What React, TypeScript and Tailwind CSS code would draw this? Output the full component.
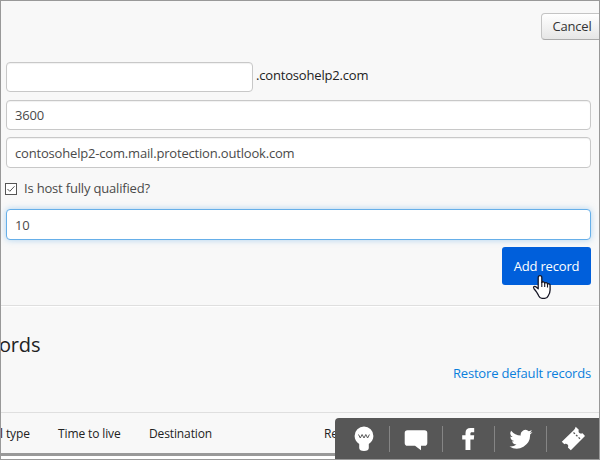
import type { ReactNode } from "react";

const FIELD =
  "block w-full rounded-[4px] border border-[#c8c8c8] bg-white px-2 text-[13px] text-[#4a4a4a] shadow-[inset_0_1px_1px_rgba(0,0,0,0.06)] outline-none";

function ToolbarItem({ children, className }: { children: ReactNode; className: string }) {
  return <div className={`flex h-full shrink-0 items-center ${className}`}>{children}</div>;
}

function Divider() {
  return <div className="h-[26px] w-px shrink-0 bg-[#858585]" />;
}

function ShareToolbar() {
  return (
    <div className="absolute right-0 bottom-0 flex h-[41px] w-[264px] items-center rounded-tl-[4px] bg-[#575757] text-white">
      <ToolbarItem className="w-[54px] pt-px pl-[19px]">
        <svg width="20" height="26" viewBox="0 0 20 26" fill="currentColor">
          <path d="M10 .6A9.400 9.400 0 0 0 .6 10c0 3.800 2.100 6.200 4.600 8v4c0 2 1.800 3 4.800 3s4.800-1 4.800-3v-4c2.500-1.800 4.600-4.200 4.600-8A9.400 9.400 0 0 0 10 .6Z" />
          <path d="m4.500 8.500 1.800 3.500 1.800-3.500 1.900 3.500 1.800-3.500 1.800 3.500 1.800-3.500" fill="none" stroke="#575757" strokeWidth="1" />
        </svg>
      </ToolbarItem>
      <Divider />
      <ToolbarItem className="w-[52px] pt-[2px] pl-[14px]">
        <svg width="25" height="24" viewBox="0 0 25 24" fill="currentColor">
          <path d="M3.500 2.300h17a2.800 2.800 0 0 1 2.800 2.800v9.800a2.800 2.800 0 0 1-2.800 2.800H17v4.500l-6-4.500H3.500A2.800 2.800 0 0 1 .7 14.900V5.100a2.800 2.800 0 0 1 2.800-2.800Z" />
        </svg>
      </ToolbarItem>
      <Divider />
      <ToolbarItem className="w-[51px] pt-px pl-[19px]">
        <svg width="14" height="24" viewBox="0 0 14 24" fill="currentColor">
          <path d="M3.500 23V12.500H.2V8.300h3.300V6C3.500 2.700 5.300 1 8.500 1h3.700v4.200H9.900C8.700 5.200 8.400 5.700 8.400 6.700v1.600h3.800l-.4 4.200H8.400V23Z" />
        </svg>
      </ToolbarItem>
      <Divider />
      <ToolbarItem className="w-[51px] pt-px pl-[14px]">
        <svg width="24" height="24" viewBox="0 0 24 24" fill="currentColor">
          <path d="M23.500 4.900a9 9 0 0 1-2.700.8 4.700 4.700 0 0 0 2-2.600 9 9 0 0 1-3 1.200 4.700 4.700 0 0 0-8 4.300A13.500 13.500 0 0 1 2.100 3.700a4.700 4.700 0 0 0 1.500 6.300 4.700 4.700 0 0 1-2.200-.6 4.700 4.700 0 0 0 3.800 4.700 4.700 4.700 0 0 1-2.100.1 4.700 4.700 0 0 0 4.400 3.300A9.500 9.500 0 0 1 .5 19.400a13.400 13.400 0 0 0 20.600-12 9 9 0 0 0 2.400-2.500Z" />
        </svg>
      </ToolbarItem>
      <Divider />
      <ToolbarItem className="w-[51px] pl-[14px]">
        <svg width="25" height="26" viewBox="0 0 25 26" fill="currentColor">
          <path d="M.8 15.800 12.700 4.200c.9-.9 1.600-2 2-3.400L17.800 3.700c-.5 1.600-.2 2.500.6 3.200s1.900.9 3.200.4L24 10 9.800 24.300 6.900 21.400c.6-1.200.4-2.300-.4-3s-1.900-.9-3.100-.2Z" />
          <path d="m12.500 6.500 7.300 7" fill="none" stroke="#575757" strokeWidth="1.300" strokeDasharray="2 1.500" />
        </svg>
      </ToolbarItem>
    </div>
  );
}

function HandCursor() {
  return (
    <svg className="absolute top-[27px] left-[30px]" width="21" height="26" viewBox="0 0 21 26">
      <path
        d="M8 1.600c1.200 0 1.800.8 1.800 1.900v5c.6-1.200 2.800-.9 2.900.6.600-1 2.700-.6 2.800 1 .8-.7 2.600-.2 2.600 1.400v4.500c0 2.800-.8 4-2 6-.6 1.500-1.800 2.300-3.300 2.300H10c-1.600 0-2.500-.8-3.200-2.300-.5-1.300-1.400-2.500-2.100-3.800-.7-1.300-1.600-2.300-2.700-3.500-1.200-1.600.2-2.900 1.500-2.100l2.700 2.200V3.500c0-1.100.6-1.900 1.800-1.900Z"
        fill="#fff"
        stroke="#161625"
        strokeWidth="1.300"
        strokeLinejoin="round"
      />
      <path d="M9.800 8v5M12.700 9v4M15.500 10v3.500" stroke="#161625" strokeWidth="1.100" />
    </svg>
  );
}

export default function App() {
  return (
    <div className="relative h-[460px] w-[600px] overflow-hidden border border-[#999] bg-[#f8f8f8] font-['Open_Sans',sans-serif] text-[13px] leading-[18px] tracking-[-0.18px] text-[#222]">
      <header className="flex h-[61px] justify-end pt-3">
        <button className="-mr-[4px] h-[27px] w-[62px] shrink-0 rounded-[4px] border border-[#c4c4c4] border-b-[#aaa] bg-linear-to-b from-white to-[#e6e6e6] pb-px text-[#333]">
          Cancel
        </button>
      </header>

      <form className="flex flex-col pr-2 pl-[5px]" onSubmit={(e) => e.preventDefault()}>
        <div className="flex h-[30px] items-center gap-[3px]">
          <div className="w-[247px]">
            <input className={`${FIELD} h-[30px]`} aria-label="Host" />
          </div>
          <span className="pb-[4px]">.contosohelp2.com</span>
        </div>
        <input className={`${FIELD} mt-2 h-[30px]`} defaultValue="3600" aria-label="Time to live" />
        <input
          className={`${FIELD} mt-[7px] h-[31px]`}
          defaultValue="contosohelp2-com.mail.protection.outlook.com"
          aria-label="Destination"
        />
        <label className="-ml-px flex h-[41px] items-center gap-[7px] text-[#4a4a4a]">
          <svg width="12" height="12" viewBox="0 0 12 12" fill="none" stroke="#555">
            <rect x=".5" y=".5" width="11" height="11" fill="#fff" />
            <path d="m2.500 6 2.300 2.300 4.700-5" />
          </svg>
          <span className="pb-[2px]">Is host fully qualified?</span>
        </label>
        <input
          className="block h-[31px] w-full rounded-[4px] border border-[#66afe9] bg-white px-2 text-[13px] text-[#4a4a4a] shadow-[0_0_6px_rgba(102,175,233,0.5)] outline-none"
          defaultValue="10"
          aria-label="Priority"
        />
        <button className="relative mt-[7px] h-[38px] w-[89px] self-end rounded-[3px] bg-[#005fdb] text-white">
          Add record
          <HandCursor />
        </button>
      </form>

      <section className="mt-5 h-[107px] border-t border-[#dfdfdf]">
        <div className="h-full border-t border-white pt-[24px]">
          <h2 className="-ml-[2px] text-[20px] leading-[28px]">ords</h2>
          <div className="mt-[5px] flex justify-end pr-2">
            <a className="text-[#0a7fdc]">Restore default records</a>
          </div>
        </div>
      </section>

      <div className="flex h-[41px] items-center border-t border-[#dfdfdf] pt-[2px] text-[12px] tracking-[-0.12px] whitespace-nowrap">
        <span className="-ml-px w-[58px]">l type</span>
        <span className="w-[91px]">Time to live</span>
        <span className="w-[175px]">Destination</span>
        <span>Re</span>
      </div>
      <div className="h-[3px] bg-[#999]" />
      <div className="h-[3px] bg-white" />

      <ShareToolbar />
    </div>
  );
}
